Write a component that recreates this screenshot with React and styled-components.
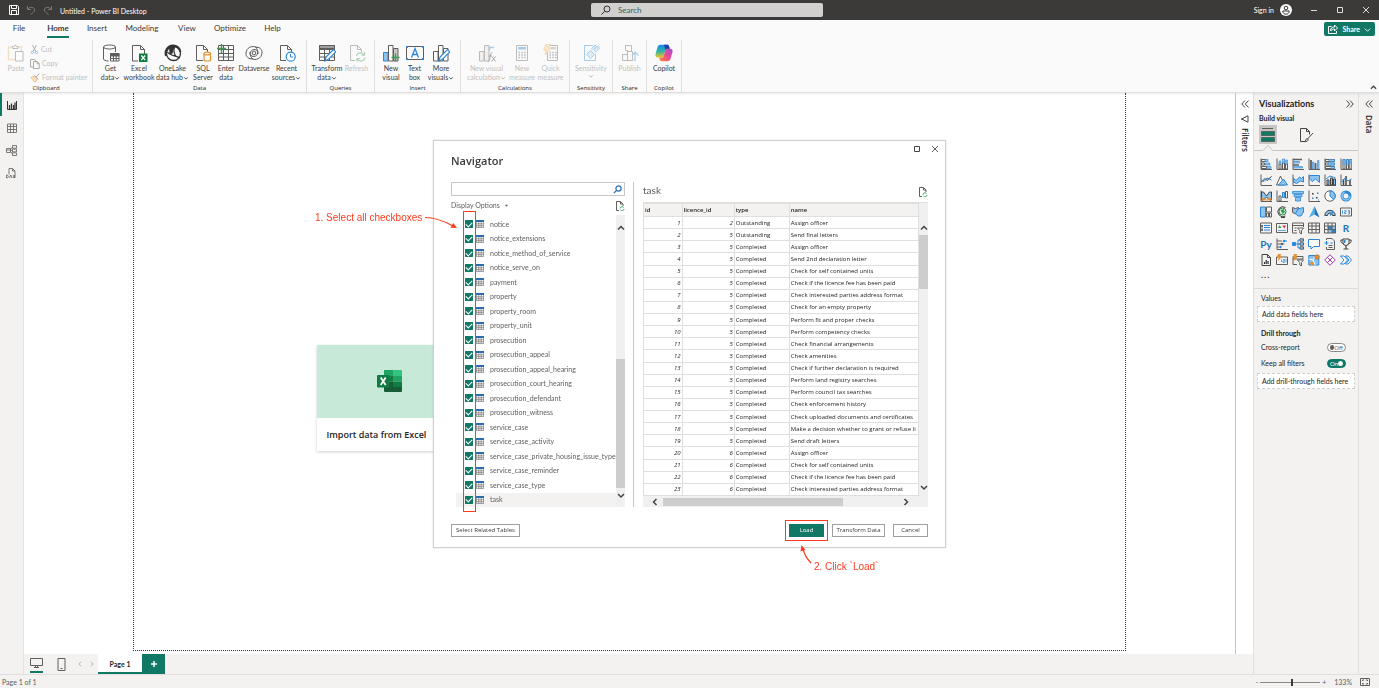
import { useState } from "react";
import styled, { createGlobalStyle, css } from "styled-components";

const green = "#117865";
const red = "#ff3b1f";
const ink = "#605e5c";
const blue = "#2b88d8";
const pale = "#8cc4f0";
const orange = "#e8912d";

const wide = `"Segoe UI", "Open Sans", sans-serif`;

const GlobalStyle = createGlobalStyle`
  * {
    box-sizing: border-box;
  }

  body {
    margin: 0;
    background: #f3f2f1;
    color: #252423;
    font-family: "Segoe UI", Lato, sans-serif;
    font-size: 7px;
    line-height: 9px;
  }

  button,
  input {
    margin: 0;
    padding: 0;
    border: 0;
    background: none;
    color: inherit;
    font: inherit;
  }

  svg {
    display: block;
    flex: none;
  }
`;

/* ---------- icons ---------- */

function Svg({ size = 18, box = 18, children, ...rest }) {
  return (
    <svg
      width={size}
      height={size}
      viewBox={`0 0 ${box} ${box}`}
      fill="none"
      stroke={ink}
      strokeWidth="1"
      aria-hidden="true"
      {...rest}
    >
      {children}
    </svg>
  );
}

const bars = (
  <>
    <path d="M1.500 17V8.500h4.500V17z" fill={pale} stroke={blue} />
    <path d="M6.500 17V1.500h4.500V17z" fill="#fff" />
    <path d="M11.500 17V4.500H16V17z" fill="#c8c6c4" />
  </>
);

const grid = <path d="M1.500 1.500h15v15h-15zM1.500 5.500h15M1.500 9.500h15M1.500 13h15M6.500 1.500v15M11.500 1.500v15" />;

const ribbonIcons = {
  paste: (
    <>
      <path d="M6 3H1.500v12.500H8M11 3h3.500v4" stroke="#edb87a" strokeWidth="1.500" />
      <path d="M5.500 4.500V2.500h1.500a1.200 1.200 0 0 1 2.400 0H11v2z" />
      <path d="M8.500 7.500h7.500v9.500H8.500z" fill="#fff" />
    </>
  ),
  database: (
    <>
      <path d="M1.500 3v12c0 1 2 2 5 2M13.500 8V3" />
      <ellipse cx="7.500" cy="3" rx="6" ry="2" />
      <path d="M8.500 9.500h8.500v7.500H8.500zM8.500 12h8.500M8.500 14.500h8.500M11.500 9.500V17M14.200 9.500V17" fill="#fff" />
      <path d="M8.500 9.500h8.500v2H8.500z" fill={ink} />
    </>
  ),
  excel: (
    <>
      <path d="M8 17H2.500V1.500h8l4 4V10M10.500 1.500v4h4" />
      <path d="M9 9.500h8.500V18H9z" fill="#107c41" stroke="none" />
      <path d="M11.300 11.500l3.900 4.600M15.200 11.500l-3.900 4.600" stroke="#fff" strokeWidth="1.200" />
    </>
  ),
  onelake: (
    <>
      <path d="M2 12C.5 7 3.500 1.500 9 1.500c4 0 7 2.500 7.300 6.500" stroke="#333" strokeWidth="2" />
      <path d="M5 2.500c2-1 4-1 5.500 0l-2 7-3 1z" fill="#333" stroke="none" />
      <circle cx="9.500" cy="9.500" r="7" stroke="#333" strokeWidth="1.300" />
      <path d="M3.500 8c2 3.500 9 4 12.500 6M10.500 3c-1 3-1 6 1.500 9.500" stroke="#333" strokeWidth="1.300" />
    </>
  ),
  sql: (
    <>
      <path d="M9 16.500H2.500V1.500h7l4 4V8M9.500 1.500v4h4" />
      <path d="M10 9.500v6.500c0 1.300 6.500 1.300 6.500 0V9.500" fill="#fff" stroke={orange} strokeWidth="1.200" />
      <ellipse cx="13.200" cy="9.500" rx="3.300" ry="1.400" fill="#fff" stroke={orange} strokeWidth="1.200" />
    </>
  ),
  enter: (
    <>
      {grid}
      <path d="M4.500 0v9M0 4.500h9" stroke="#3a9b54" strokeWidth="1.400" />
    </>
  ),
  dataverse: (
    <>
      <path d="M12 3.500C7 1 1.500 3.500 1 9c-.3 4 3 6.500 6.500 5.500" />
      <path d="M7.500 14.500C4 12 4.500 6 9 5.500c3 0 4.500 2 4 4.500" />
      <path d="M6 14.500C11 17 16.500 14.500 17 9c.3-4-3-6.500-6.500-5.500" />
      <path d="M10.500 3.500C14 6 13.500 12 9 12.500c-3 0-4.500-2-4-4.500" />
      <circle cx="9" cy="9" r="1.800" />
    </>
  ),
  recent: (
    <>
      <path d="M8 16.500H2.500V1.500h7l4 4V8M9.500 1.500v4h4" />
      <circle cx="12.700" cy="12.700" r="4.500" fill="#fff" stroke={blue} strokeWidth="1.200" />
      <path d="M12.500 10v3h2.500" stroke={blue} />
    </>
  ),
  transform: (
    <>
      {grid}
      <path d="M1.500 1.500h15v3h-15z" fill="#a19f9d" />
      <path d="M7 17l1-4 7.500-7.500 2.300 2.300-7.500 7.500z" fill="#fff" stroke={blue} strokeWidth="1.200" />
    </>
  ),
  refresh: (
    <>
      <path d="M7 16.500H2.500V1.500h7l4 4V8M9.500 1.500v4h4" />
      <path d="M8.500 12a4 4 0 0 1 7.500-1M16.500 8v3.200h-3M17 13.500a4 4 0 0 1-7.500 1.500M9 17.500v-3h3" stroke="#3a9b54" strokeWidth="1.200" />
    </>
  ),
  visual: (
    <>
      {bars}
      <path d="M13.500 9.500v8M9.500 13.500h8" stroke="#3a9b54" strokeWidth="1.300" />
    </>
  ),
  textbox: (
    <>
      <path d="M.5 2.500h17v13H.5z" />
      <path d="M0 2h2v2H0zM16 2h2v2h-2zM0 14h2v2H0zM16 14h2v2h-2z" fill={blue} stroke="none" />
      <path d="M5.500 13.500L9 4.500l3.500 9M6.800 10.500h4.400" stroke={blue} strokeWidth="1.300" />
    </>
  ),
  more: (
    <>
      <path d="M1.500 17V7.500h4.500V17zM6.500 17V1.500h4.500V17zM11.500 17V4.500H16V17z" fill="#fff" />
      <path d="M7 17l1-4 7.500-7.500 2.300 2.300-7.500 7.500z" fill="#fff" stroke={blue} strokeWidth="1.200" />
    </>
  ),
  calculation: (
    <>
      <path d="M1.500 17V7.500h4.500V17zM6.500 17V1.500h4.500V17z" fill="#e1dfdd" />
      <path d="M11.500 7V3.500H16" stroke={blue} strokeWidth="1.500" />
      <path d="M9.500 18c2 0 2-2 2.500-5s1-4.500 2.500-4.500M10.500 12h3.500M14 12.500l3.500 5M17.500 12.500l-4 5" stroke="#333" />
    </>
  ),
  measure: (
    <>
      <path d="M3.500 1.500h11v15h-11z" />
      <path d="M5 3h8v2.500H5z" fill={blue} stroke="none" />
      <path d="M5.500 8.500h7.500M5.500 11h7.500M5.500 13.500h7.500" strokeWidth="1.500" strokeDasharray="1.500 1.300" />
    </>
  ),
  quick: (
    <>
      <path d="M5.500 1.500h10v15h-10z" />
      <path d="M9 3h5v2.500H9z" fill="#a19f9d" stroke="none" />
      <path d="M7.500 8.500h7.500M7.500 11h7.500M7.500 13.500h7.500" strokeWidth="1.500" strokeDasharray="1.500 1.300" />
      <path d="M4.500 0h4.500L6.500 4H9l-6 7 1.500-5H1.500z" fill="#f7c98d" stroke={orange} strokeWidth=".8" />
    </>
  ),
  sensitivity: (
    <>
      <path d="M11 1.500H2.500v15h11V10" stroke={blue} />
      <path d="M4.500 10.500l4-4 4 4-4 4zM9 5.500L13 1l1.500 1.500-2.500 3L15.500 2l2 2-4.500 4.500" fill="#b9dbf5" stroke={blue} />
    </>
  ),
  publish: (
    <>
      <path d="M1.500 16.500V10.500h5v6zM6.500 16.500V6.500h-2V1.500h6v6M6.500 7.500h5v9h-5z" />
      <path d="M12.500 16.500h2M14 16V8.500M11 11.500l3.200-3.300 3.300 3.300" stroke={blue} strokeWidth="1.200" />
    </>
  ),
};

function CopilotIcon() {
  return (
    <Svg stroke="none">
      <defs>
        <linearGradient id="cpA" x1="0" y1="0" x2="0" y2="1">
          <stop offset="0" stopColor="#1a86e8" />
          <stop offset=".5" stopColor="#2bb5a8" />
          <stop offset="1" stopColor="#f2c21c" />
        </linearGradient>
        <linearGradient id="cpB" x1="1" y1="0" x2="0" y2="1">
          <stop offset="0" stopColor="#a24bea" />
          <stop offset=".5" stopColor="#ec4a8c" />
          <stop offset="1" stopColor="#f98a3c" />
        </linearGradient>
      </defs>
      <path d="M5.500.8h6.700c1 0 1.600.6 1.900 1.600l.7 2.300h-2.500c-1.200 0-1.700.6-2 1.700L8.600 12c-.3 1-.8 1.600-1.900 1.600H3C.7 13.600 0 12 .6 9.800l1.900-6.500C3 1.700 3.800.8 5.500.8z" fill="url(#cpA)" />
      <path d="M12.500 17.200H6.800c-1.200 0-1.800-.6-2.100-1.700l-.5-1.900h2.400c1.200 0 1.800-.6 2.100-1.700l1.600-5.500c.3-1 .9-1.700 2-1.700H15c2.300 0 3 1.700 2.400 3.800l-1.900 6.300c-.5 1.600-1.300 2.400-3 2.400z" fill="url(#cpB)" />
      <path d="M9 .8h3.200c1 0 1.600.6 1.900 1.600l.7 2.300h-2.500c-1 0-1.600.4-1.900 1.200z" fill="#1f3fae" />
    </Svg>
  );
}

const axis = <path d="M1 .5v11h11" />;
const frame = <path d="M.5 1h11v10H.5z" />;
const sheet = <path d="M.5 1h11v10H.5zM.5 4h11M.5 7.500h11M4 1v10M8 1v10" />;
const bolt = <path d="M2 0h3.500L4 2.500h2L2 7l.5-3H.8z" fill={orange} stroke="none" />;

const visuals = [
  ["Stacked bar chart", <>{axis}<path d="M1.500 1.500h4v2h-4zM1.500 5h3v2h-3zM1.500 8.500h5v2h-5z" /><path d="M5 1.500h3v2H5zM5 5h5v2H5zM7 8.500h4v2H7z" fill={pale} stroke={blue} strokeWidth=".6" /></>],
  ["Stacked column chart", <>{axis}<path d="M3 6h2v5H3zM6.500 5h2v6h-2zM9.500 6h2v5h-2z" /><path d="M3 3h2v3H3zM6.500 1h2v4h-2zM9.500 2h2v4h-2z" fill={pale} stroke={blue} strokeWidth=".6" /></>],
  ["Clustered bar chart", <>{axis}<path d="M1 1.500h9M1 7h6" strokeWidth="1.500" /><path d="M1.500 3.500h6v1.500h-6zM1.500 8.500h9v1.500h-9z" fill={pale} stroke={blue} strokeWidth=".6" /></>],
  ["Clustered column chart", <>{axis}<path d="M3 2v9M7.500 5v6" strokeWidth="1.800" /><path d="M4.500 4h1.500v7H4.500zM9.500 2.500H11V11H9.500z" fill={pale} stroke={blue} strokeWidth=".6" /></>],
  ["100% stacked bar chart", <>{axis}<path d="M1.500 1.500h9v2h-9zM1.500 5h9v2h-9zM1.500 8.500h9v2h-9z" /><path d="M5 1.500h5.500v2H5zM4 5h6.500v2H4zM7 8.500h3.500v2H7z" fill={pale} stroke={blue} strokeWidth=".6" /></>],
  ["100% stacked column chart", <>{axis}<path d="M3 1.500h2V11H3zM6.500 1.500h2V11h-2zM9.800 1.500h2V11h-2z" /><path d="M3 1.500h2V6H3zM6.500 1.500h2V7h-2zM9.800 1.500h2V5h-2z" fill={pale} stroke={blue} strokeWidth=".6" /></>],
  ["Line chart", <>{axis}<path d="M1.500 8L5 4.500l2 2 4.500-4" stroke="#333" /><path d="M1.500 6L4 7.500 7 4l4.500 2" stroke={blue} /></>],
  ["Area chart", <><path d="M.5 11l4-9 4 9z" fill="#fff" /><path d="M2.500 11l5-6 4 6z" fill={pale} stroke={blue} /></>],
  ["Stacked area chart", <>{axis}<path d="M1.500 4L4 6.500 7.500 3l2 1.500 2-2V8l-3-1-4 2.500-3-1.500z" fill={pale} stroke={blue} /></>],
  ["100% stacked area chart", <>{axis}<path d="M1.500 1.500h10v7L7.500 5l-3 2.500-3-2.500z" fill={pale} stroke={blue} /></>],
  ["Line and stacked column chart", <>{axis}<path d="M3 6h2v5H3zM6.500 4h2v7h-2zM9.500 5h2v6h-2z" fill={pale} stroke="#444" /><path d="M2 5l4-3 5.500 2" stroke={blue} /></>],
  ["Line and clustered column chart", <>{axis}<path d="M3.500 5v6M6 2v9M10 6v5" stroke="#444" strokeWidth="1.500" /><path d="M2 8l3-4 3 3 3.500-2" stroke={blue} /></>],
  ["Ribbon chart", <>{axis}<path d="M1.500 2h2l3 4 3-4h2v8h-2l-3-3-3 3h-2z" fill={pale} stroke="#444" /><path d="M1.500 7l5 2.500L11.500 7v3.500h-10z" fill={orange} stroke="none" opacity=".8" /></>],
  ["Waterfall chart", <>{axis}<path d="M3 6h2v5H3zM9.500 1.500h2V8h-2z" /><path d="M6.500 2.500h2v5h-2z" fill={pale} stroke={blue} /></>],
  ["Funnel chart", <path d="M.5 1.500h11v2.200H.5zM2 4.500h8v2.200H2zM3.500 7.500h5v3.500h-5z" fill={pale} stroke={blue} strokeWidth=".8" />],
  ["Scatter chart", <>{axis}<path d="M4 3h1.500v1.500H4zM8 7h1.500v1.500H8z" fill="#333" stroke="none" /><path d="M9 2.500h1.500V4H9zM4 7.500h1.500V9H4zM10 9.500h1v1h-1z" fill={blue} stroke="none" /></>],
  ["Pie chart", <><circle cx="6" cy="6" r="5.200" fill="#fff" /><path d="M6 .8a5.200 5.200 0 0 1 3.500 9L6 6z" fill={pale} stroke={blue} /></>],
  ["Donut chart", <><circle cx="6" cy="6" r="4" stroke={blue} strokeWidth="3" /><circle cx="6" cy="6" r="4" stroke={pale} strokeWidth="1.500" strokeDasharray="17 9" /></>],
  ["Treemap", <><path d="M.5 1h5v10h-5z" fill={pale} stroke={blue} /><path d="M6.500 1h5v5h-5zM6.500 7h2v4h-2zM9.500 7h2v4h-2z" /></>],
  ["Map", <><path d="M9.500 10a5 5 0 1 1 0-8.500M5 11.500h4" stroke="#444" /><circle cx="6.500" cy="5.500" r="3.500" fill="#e7f3e9" stroke="#2f7d46" /><path d="M4.500 4l3-1 1.500 3-2.500 2z" fill="#2f9d57" stroke="none" /></>],
  ["Filled map", <><path d="M.5 1.500l3 1 3-1v5L4 8 .5 6.500z" fill={pale} /><path d="M6 3l5.500-1.500V6L9 10H6L3.500 7.500z" fill={pale} stroke={blue} /></>],
  ["Azure map", <><path d="M6.500 0L1 11.500l5.500-3z" fill="#4db2ec" stroke="none" /><path d="M6.500 0l5 11.500-5-3z" fill="#1673bd" stroke="none" /></>],
  ["Gauge", <><path d="M.8 9.500a5.200 5.200 0 0 1 10.400 0H8.500a2.500 2.500 0 0 0-5 0z" fill={pale} stroke="#444" /><path d="M6 9.500L9.500 5" stroke={blue} strokeWidth="1.300" /></>],
  ["Card", <><path d="M.5 2h11v8H.5z" /><path d="M2.500 4.500v3.500M4.500 4.500H6V6H4.500v1.500H6.200M8 4.500h1.500v3.500H8M8 6h1.500" stroke={blue} strokeWidth=".8" /></>],
  ["Multi-row card", <>{frame}<path d="M2 3v2.500M2 6.500V9" stroke="#444" strokeWidth="1.500" /><path d="M4 3.500h6M4 5.500h6M4 8h6" stroke={blue} /></>],
  ["KPI", <><path d="M.5 1.500h11v9H.5z" /><path d="M2 6l1.700-3 1.700 3z" fill="#3a9b54" stroke="none" /><path d="M6.500 3.500H10L8.200 6.500z" fill="#d13438" stroke="none" /><path d="M2 8.500h8" stroke={blue} strokeWidth=".7" /></>],
  ["Slicer", <><path d="M5 11H.5V1h11v4M.5 3.500h11M2.500 6h2M2.500 8.500h2" /><path d="M5.500 6h6L9.500 8.500V12L7.800 11V8.500z" fill="#fff" /></>],
  ["Table", sheet],
  ["Matrix", <><path d="M4 4h7.500v7H4z" fill={pale} stroke="none" /><path d="M4 4h4v3.500H4zM8 7.500h3.500V11H8z" fill={blue} stroke="none" />{sheet}</>],
  ["R script visual", "R"],
  ["Python visual", "Py"],
  ["Key influencers", <>{axis}<path d="M1 3h5M1 6h4M1 9h2.500" /><path d="M8 3h3M5.500 6h3" stroke={blue} /><circle cx="8" cy="3" r="1.200" fill={blue} stroke="none" /><circle cx="6" cy="6" r="1.200" fill={ink} stroke="none" /><circle cx="4.500" cy="9" r="1.200" fill={blue} stroke="none" /></>],
  ["Decomposition tree", <><path d="M3.500 6H8M6 6V2h2M6 6v4h2" stroke={blue} /><path d="M.5 4.500h3v3h-3z" fill={blue} stroke={blue} /><path d="M8 .8h3.500v2.400H8zM8 4.800h3.500v2.400H8zM8 8.800h3.500v2.400H8z" fill={pale} /></>],
  ["Q&A", <path d="M.5 1.500h11v7H5.500L3 11V8.500H.5z" fill="#fff" stroke={blue} />],
  ["Narrative", <><path d="M2.500 2V.5H8L10.500 3v8.500h-8V9" /><path d="M4.500 7.500h4M4.500 9.500h4" /><path d="M2.500 3v4M.5 5h4M6.500 5H9" stroke={blue} /></>],
  ["Metrics", <><path d="M3 1h6v3.500a3 3 0 0 1-6 0zM3 2H.8c0 2.500 1 3.500 2.400 3.500M9 2h2.200c0 2.500-1 3.500-2.400 3.500" stroke="#444" /><path d="M6 7.500v3M3.500 11h5" stroke="#444" strokeWidth="1.200" /><path d="M4 2h1.500v3H4z" fill={blue} stroke="none" /></>],
  ["Paginated report", <><path d="M2 .5h5.500L10.500 3.500v8H2zM7.500.5v3h3" stroke="#444" /><path d="M4.500 10V8M6.200 10V6M8 10V7" stroke="#333" strokeWidth="1.200" /></>],
  ["Card (new)", <><path d="M.5 3h11v7.500H.5z" /><path d="M5.500 8V5.500M7 5.500h1.500V7H7v1.500h1.500M10 5.200v3.300" stroke={blue} strokeWidth=".8" />{bolt}</>],
  ["Slicer (new)", <><path d="M5 10.500H1v-8h10V5M1 5h10" /><path d="M5.500 6h6L9.500 8.500V12L7.800 11V8.500z" fill="#fff" />{bolt}</>],
  ["ArcGIS map", <><path d="M.8 1.500h10v9.500h-10z" fill={pale} stroke={blue} /><path d="M.8 5l4 1 2.500 5M4.800 6l3-4.500" stroke="#fff" /><circle cx="9" cy="3" r="2.200" fill={orange} stroke="#a4501a" strokeWidth=".5" /><circle cx="4" cy="9.500" r="1.800" fill={orange} stroke="none" /></>],
  ["Power Apps", <><path d="M6 .7L11.300 6 6 11.300.7 6z" fill="#fff" stroke="#a33bb0" /><path d="M3.300 3.300l5.400 5.400M8.700 3.300L3.300 8.700" stroke="#a33bb0" /></>],
  ["Power Automate", <><path d="M.5 2h3.500L7.500 6 4 10H.5L4 6z" fill="#fff" stroke={blue} /><path d="M5.500 2H8l3.500 4L8 10H5.500L9 6z" fill="#fff" stroke={blue} /></>],
];

function Chevron({ d = "M1 3l3 3 3-3", size = 8, stroke = "#444", width = 1 }) {
  return (
    <Svg size={size} box={8} stroke={stroke} strokeWidth={width}>
      <path d={d} />
    </Svg>
  );
}

const up = "M1 5.500l3-3 3 3";
const left = "M5.500 1l-3 3 3 3";
const right = "M2.500 1l3 3-3 3";
const doubleLeft = "M4 .5L.8 4 4 7.500M7.500.5L4.300 4l3.200 3.500";
const doubleRight = "M.5.500L3.700 4 .5 7.500M4 .5L7.200 4 4 7.500";

function FileRefreshIcon() {
  return (
    <Svg size={10} box={10}>
      <path d="M4 9.500H1.500V.5h4l2.500 2.500v2M5.500.5V3H8" />
      <path d="M5 7.500a2 2 0 0 1 3.500-1M9 8a2 2 0 0 1-3.500 1" stroke="#2f9d57" />
    </Svg>
  );
}

/* ---------- window frame ---------- */

const Shell = styled.div`
  display: flex;
  flex-direction: column;
  height: 100vh;
  overflow: hidden;
`;

const TitleBar = styled.header`
  display: grid;
  grid-template-columns: 591fr 232fr 556fr;
  align-items: center;
  height: 20px;
  background: #3b3a39;
  color: #fff;
`;

const TitleLeft = styled.div`
  display: flex;
  align-items: center;
  gap: 7px;
  padding-left: 9px;

  span {
    padding-top: 3px;
  }
`;

const TitleRight = styled.div`
  display: flex;
  align-items: center;
  justify-content: flex-end;
  gap: 18px;
  padding-right: 9px;
`;

const SignIn = styled.button`
  display: flex;
  align-items: center;
  gap: 6px;
`;

const SearchBox = styled.label`
  display: flex;
  align-items: center;
  gap: 7px;
  height: 14px;
  padding-left: 10px;
  border-radius: 2px;
  background: #d2d0ce;

  input {
    flex: 1;
    min-width: 0;
    font-size: 8px;
    outline: none;
  }

  input::placeholder {
    color: #33665c;
    opacity: 1;
  }
`;

const MenuBar = styled.nav`
  display: flex;
  align-items: center;
  height: 20px;
  padding-right: 4px;
  background: #fafafa;
  font-size: 8px;
`;

const MenuTab = styled.button`
  width: ${({ $w }) => $w}px;
  height: 18px;
  color: #3b3a39;
  text-align: center;

  span {
    display: inline-block;
    padding: 1px 0 3px;
    border-bottom: 2px solid transparent;
  }

  ${({ $active }) =>
    $active &&
    css`
      font-weight: 700;

      span {
        border-color: ${green};
      }
    `}
`;

const ShareButton = styled.button`
  display: flex;
  align-items: center;
  gap: 4px;
  height: 14px;
  margin: 0 0 2px auto;
  padding: 0 4px;
  border-radius: 2px;
  background: ${green};
  color: #fff;
  font-size: 7px;
  font-weight: 700;
`;

const Ribbon = styled.div`
  display: flex;
  height: 53px;
  border-bottom: 1px solid #e1dfdd;
  background: #fafafa;
  box-shadow: 0 1px 2px rgba(0, 0, 0, 0.08);
  z-index: 1;
`;

const Group = styled.section`
  display: flex;
  flex-direction: column;
  justify-content: space-between;
  padding: 4px 4px 0;
  border-right: 1px solid #e1dfdd;

  h2 {
    margin: 0;
    font-family: ${wide};
    font-size: 6px;
    font-weight: 400;
    line-height: 7px;
    text-align: center;
  }
`;

const Tools = styled.div`
  display: flex;
  justify-content: center;
`;

const Tool = styled.button`
  display: flex;
  flex-direction: column;
  align-items: center;
  width: ${({ $w }) => $w}px;
  color: #3b3a39;
  white-space: nowrap;

  > svg {
    margin-bottom: 2px;
  }

  > span {
    display: flex;
    align-items: center;
  }

  &:disabled {
    color: #c1bfbd;
  }

  &:disabled svg {
    opacity: 0.4;
  }
`;

const ClipList = styled.div`
  display: flex;
  flex-direction: column;
  gap: 3px;
  width: 60px;
  padding-left: 2px;

  button {
    display: flex;
    align-items: center;
    gap: 2px;
    height: 11px;
    color: #c1bfbd;
    white-space: nowrap;
  }

  svg {
    opacity: 0.5;
  }
`;

const CollapseButton = styled.button`
  align-self: flex-end;
  margin: 0 2px 1px auto;
`;

const Body = styled.div`
  display: flex;
  flex: 1;
  min-height: 0;
`;

const SideNav = styled.nav`
  display: flex;
  flex-direction: column;
  width: 24px;
  border-right: 1px solid #e6e4e2;
  background: #f3f2f1;
`;

const SideButton = styled.button`
  display: grid;
  place-items: center;
  height: 23px;
  padding-right: 2px;
  border-left: 2px solid ${({ $active }) => ($active ? green : "transparent")};
`;

const Center = styled.div`
  display: flex;
  flex: 1;
  flex-direction: column;
  min-width: 0;
`;

const Workspace = styled.div`
  display: flex;
  flex: 1;
  background: #fff;
`;

const Canvas = styled.main`
  flex: 1;
  padding: 0 109px 3px;
`;

const ReportPage = styled.div`
  height: 100%;
  padding-top: 252px;
  border: 1px dotted #3b3a39;
  border-top: 0;
`;

const StarterRow = styled.div`
  display: flex;
  max-width: 626px;
  margin: 0 auto;
`;

const StarterCard = styled.button`
  width: 144px;
  background: #fff;
  box-shadow: 0 1px 3px rgba(0, 0, 0, 0.2);
  font-family: ${wide};
  font-size: 9px;
  font-weight: 600;
  line-height: 12px;
  text-align: left;
  white-space: nowrap;

  div {
    display: grid;
    place-items: center;
    height: 73px;
    background: #c7e9d7;
  }

  p {
    margin: 0;
    padding: 11px 10px 10px;
  }
`;

const SidePane = styled.aside`
  display: flex;
  flex-direction: column;
  align-items: center;
  gap: 7px;
  width: ${({ $w }) => $w}px;
  padding-top: 7px;
  border-left: ${({ $line }) => $line};
  background: ${({ $bg }) => $bg};

  h2 {
    margin: 0;
    font-family: ${wide};
    font-size: 8px;
    font-weight: 600;
    line-height: 10px;
    writing-mode: vertical-rl;
  }
`;

const FilterHeading = styled.div`
  display: flex;
  flex-direction: column;
  align-items: center;
  gap: 5px;
`;

const PageTabs = styled.div`
  display: flex;
  height: 20px;
  background: #f3f2f1;
`;

const LayoutButton = styled.button`
  width: 25px;
  display: grid;
  place-items: center;

  span {
    padding-bottom: 2px;
    border-bottom: 2px solid ${({ $active }) => ($active ? green : "transparent")};
  }
`;

const PageArrow = styled.button`
  width: 12px;
  display: grid;
  place-items: center;
`;

const PageTab = styled.button`
  width: 44px;
  padding-top: 2px;
  border-bottom: 2px solid ${green};
  background: #fff;
  font-weight: 700;
`;

const AddPage = styled.button`
  width: 23px;
  display: grid;
  place-items: center;
  background: ${green};
`;

/* ---------- visualizations pane ---------- */

const VizPane = styled.aside`
  width: 106px;
  padding-top: 6px;
  border-right: 1px solid #e1dfdd;
  border-left: 1px solid #e1dfdd;
  background: #f3f2f1;
`;

const VizTitle = styled.div`
  display: flex;
  align-items: center;
  justify-content: space-between;
  padding: 0 4px 0 5px;

  h2 {
    margin: 0;
    font-size: 9px;
    font-weight: 700;
    line-height: 10px;
  }
`;

const VizSub = styled.h3`
  margin: 0;
  padding: 5px 5px 2px;
  font-size: 7px;
  font-weight: 700;
  line-height: 9px;
`;

const VizModes = styled.div`
  display: flex;
  gap: 20px;
  padding: 0 5px;

  button {
    display: grid;
    place-items: center;
    width: 18px;
    height: 19px;
  }

  button:first-child {
    background: #c8c6c4;
  }
`;

const Notch = styled.svg`
  width: 100%;
  height: 8px;
`;

const VizGrid = styled.div`
  display: grid;
  grid-template-columns: repeat(6, 1fr);
  padding: 4px 4px 0;

  button {
    display: grid;
    place-items: center;
    height: 16px;
    color: #2072b8;
    font-size: 10px;
    font-weight: 700;
  }
`;

const MoreDots = styled.button`
  display: block;
  padding: 2px 7px 8px;
  font-size: 9px;
  letter-spacing: 1px;
  line-height: 10px;
`;

const Wells = styled.div`
  display: flex;
  flex-direction: column;
  gap: 3px;
  padding: 4px 3px;
  border-top: 1px solid #dddbd9;
`;

const WellLabel = styled.h4`
  margin: ${({ $strong }) => ($strong ? "3px 0 0" : 0)};
  padding: 0 4px;
  font-size: 7px;
  font-weight: ${({ $strong }) => ($strong ? 700 : 400)};
  line-height: 10px;
`;

const Well = styled.div`
  padding: 2px 4px;
  border: 1px dashed #d2d0ce;
  background: #fff;
  line-height: 10px;
  white-space: nowrap;
`;

const WellRow = styled.label`
  display: flex;
  align-items: center;
  justify-content: space-between;
  height: 13px;
  padding: 0 9px 0 4px;
`;

const Switch = styled.span`
  position: relative;
  display: flex;
  flex-direction: ${({ $on }) => ($on ? "row-reverse" : "row")};
  align-items: center;
  justify-content: space-between;
  width: 19px;
  height: 9px;
  padding: 0 2px;
  border: 1px solid ${({ $on }) => ($on ? green : "#8a8886")};
  border-radius: 5px;
  background: ${({ $on }) => ($on ? green : "#fff")};
  color: ${({ $on }) => ($on ? "#fff" : ink)};
  font-size: 6px;
  line-height: 7px;

  i {
    width: 5px;
    height: 5px;
    border-radius: 50%;
    background: ${({ $on }) => ($on ? "#fff" : ink)};
  }

  input {
    position: absolute;
    inset: 0;
    opacity: 0;
  }
`;

/* ---------- status bar ---------- */

const StatusBar = styled.footer`
  display: flex;
  align-items: center;
  justify-content: space-between;
  height: 14px;
  padding: 1px 9px 0 2px;
  border-top: 1px solid #e1dfdd;
  color: ${ink};
`;

const Zoom = styled.div`
  display: flex;
  align-items: center;
  gap: 2px;

  input {
    width: 60px;
    height: 8px;
    appearance: none;
  }

  input::-webkit-slider-runnable-track {
    height: 1px;
    background: #8a8886;
  }

  input::-webkit-slider-thumb {
    width: 2px;
    height: 7px;
    margin-top: -3px;
    appearance: none;
    background: #3b3a39;
  }

  output {
    margin: 0 6px;
  }
`;

/* ---------- navigator dialog ---------- */

const Overlay = styled.div`
  position: fixed;
  inset: 0;
  z-index: 2;
  display: grid;
  place-items: center;
`;

const Dialog = styled.section`
  position: relative;
  width: 513px;
  border: 1px solid #d2d0ce;
  background: #fff;
  box-shadow: 0 0 2px rgba(0, 0, 0, 0.12);
`;

const DialogButtons = styled.div`
  display: flex;
  justify-content: flex-end;
  gap: 10px;
  padding: 4px 6px 0;
`;

const DialogTitle = styled.h1`
  margin: 0;
  padding: 0 17px 14px;
  color: #3b3a39;
  font-family: ${wide};
  font-size: 11px;
  font-weight: 600;
  line-height: 15px;
`;

const DialogBody = styled.div`
  display: flex;
  height: 325px;
  margin: 0 17px;
`;

const TreePane = styled.div`
  display: flex;
  flex-direction: column;
  width: 174px;
`;

const TreeSearch = styled.label`
  display: flex;
  align-items: center;
  height: 14px;
  padding-right: 2px;
  border: 1px solid #c8c6c4;

  input {
    flex: 1;
    min-width: 0;
    outline: none;
  }
`;

const TreeOptions = styled.div`
  display: flex;
  align-items: center;
  justify-content: space-between;
  height: 19px;
  color: ${ink};

  button {
    display: flex;
    align-items: center;
    gap: 4px;
  }
`;

const TreeScroll = styled.div`
  display: flex;
  flex: 1;
  padding-left: 5px;
`;

const Tree = styled.ul`
  display: flex;
  flex: 1;
  flex-direction: column;
  min-width: 0;
  margin: 0;
  padding: 2px 0 0;
  list-style: none;
`;

const TreeRow = styled.li`
  flex: 1;
  display: flex;
  align-items: center;
  background: ${({ $selected }) => ($selected ? "#f3f2f1" : "none")};
  color: ${ink};

  label {
    display: flex;
    align-items: center;
    padding-left: 9px;
    white-space: nowrap;
  }

  svg {
    margin: 0 6px 0 3px;
  }
`;

const Check = styled.input`
  display: grid;
  place-items: center;
  width: 8px;
  height: 8px;
  border-radius: 1px;
  appearance: none;
  background: #fff;
  box-shadow: inset 0 0 0 1px ${green};

  &:checked {
    background: ${green};
  }

  &:checked::after {
    content: "";
    width: 5px;
    height: 3px;
    margin-top: -1px;
    border: solid #fff;
    border-width: 0 0 1px 1px;
    transform: rotate(-45deg);
  }
`;

const ScrollBar = styled.div`
  display: flex;
  flex: none;
  flex-direction: ${({ $across }) => ($across ? "row" : "column")};
  align-items: center;
  justify-content: space-between;
  width: ${({ $across }) => ($across ? "auto" : "9px")};
  height: ${({ $across }) => ($across ? "10px" : "auto")};
  padding: ${({ $pad }) => $pad};
  background: #f0f0f0;
`;

const Thumb = styled.i`
  flex: none;
  width: ${({ $w }) => $w};
  height: ${({ $h }) => $h};
  margin: ${({ $m }) => $m || 0};
  background: #cdcdcd;
`;

const Divider = styled.div`
  width: 1px;
  margin: 0 9px 0 8px;
  background: #c8c6c4;
`;

const Preview = styled.div`
  display: flex;
  flex: 1;
  flex-direction: column;
  min-width: 0;
`;

const PreviewHead = styled.div`
  display: flex;
  align-items: center;
  justify-content: space-between;
  height: 20px;
  color: ${ink};

  h2 {
    margin: 0;
    padding-bottom: 3px;
    font-size: 10px;
    font-weight: 400;
    line-height: 13px;
  }
`;

const PreviewBody = styled.div`
  display: grid;
  grid-template-columns: 1fr 9px;
  flex: 1;
  min-height: 0;
  border-top: 1px solid #e1dfdd;
  background: #f3f2f1;
`;

const DataTable = styled.table`
  width: 100%;
  height: 293px;
  border-collapse: collapse;
  table-layout: fixed;
  background: #fff;
  font-family: ${wide};
  font-size: 6px;
  line-height: 8px;

  th,
  td {
    overflow: hidden;
    padding: 0 1px;
    border: 1px solid #e1dfdd;
    text-align: left;
    white-space: nowrap;
  }

  th {
    height: 13px;
    background: #f3f2f1;
    font-weight: 600;
  }

  td.num {
    font-style: italic;
    text-align: right;
  }
`;

const Footer = styled.footer`
  display: flex;
  gap: 8px;
  padding: 17px 17px 10px;
`;

const DialogButton = styled.button`
  width: ${({ $w }) => $w}px;
  height: 13px;
  border: 1px solid ${({ $primary }) => ($primary ? green : "#a19f9d")};
  background: ${({ $primary }) => ($primary ? green : "#fff")};
  color: ${({ $primary }) => ($primary ? "#fff" : "#3b3a39")};
  font-family: ${wide};
  font-size: 6px;
  line-height: 9px;
  white-space: nowrap;
`;

const LoadMark = styled.span`
  margin: -4px -4px -4px auto;
  padding: 3px;
  border: 1px solid ${red};

  button {
    display: block;
  }
`;

const Note = styled.span`
  position: absolute;
  top: ${({ $y }) => $y}px;
  left: ${({ $x }) => $x}px;
  color: ${red};
  font-family: "Liberation Sans", Arial, sans-serif;
  font-size: 10px;
  line-height: 12px;
  white-space: nowrap;
`;

const NoteArrow = styled.svg`
  position: absolute;
  top: ${({ $y }) => $y}px;
  left: ${({ $x }) => $x}px;
`;

const NoteBox = styled.span`
  position: absolute;
  top: 70px;
  bottom: 35px;
  left: 29px;
  width: 13px;
  border: 1px solid ${red};
  pointer-events: none;
`;

/* ---------- data ---------- */

const menu = [
  ["File", 38],
  ["Home", 40],
  ["Insert", 38],
  ["Modeling", 52],
  ["View", 38],
  ["Optimize", 48],
  ["Help", 37],
];

const groups = [
  {
    name: "Data",
    tools: [
      ["database", 27, "Get", "data", true],
      ["excel", 30, "Excel", "workbook"],
      ["onelake", 37, "OneLake", "data hub", true],
      ["sql", 24, "SQL", "Server"],
      ["enter", 22, "Enter", "data"],
      ["dataverse", 34, "Dataverse"],
      ["recent", 31, "Recent", "sources", true],
    ],
  },
  {
    name: "Queries",
    tools: [
      ["transform", 32, "Transform", "data", true],
      ["refresh", 27, "Refresh", "", false, true],
    ],
  },
  {
    name: "Insert",
    tools: [
      ["visual", 24, "New", "visual"],
      ["textbox", 23, "Text", "box"],
      ["more", 30, "More", "visuals", true],
    ],
  },
  {
    name: "Calculations",
    tools: [
      ["calculation", 43, "New visual", "calculation", true, true],
      ["measure", 28, "New", "measure", false, true],
      ["quick", 29, "Quick", "measure", false, true],
    ],
  },
  { name: "Sensitivity", tools: [["sensitivity", 34, "Sensitivity", " ", true, true]] },
  { name: "Share", tools: [["publish", 25, "Publish", "", false, true]] },
  { name: "Copilot", tools: [["copilot", 26, "Copilot"]] },
];

const tables = [
  "notice",
  "notice_extensions",
  "notice_method_of_service",
  "notice_serve_on",
  "payment",
  "property",
  "property_room",
  "property_unit",
  "prosecution",
  "prosecution_appeal",
  "prosecution_appeal_hearing",
  "prosecution_court_hearing",
  "prosecution_defendant",
  "prosecution_witness",
  "service_case",
  "service_case_activity",
  "service_case_private_housing_issue_type",
  "service_case_reminder",
  "service_case_type",
  "task",
];

const taskNames = [
  "Assign officer",
  "Send final letters",
  "Assign officer",
  "Send 2nd declaration letter",
  "Check for self contained units",
  "Check if the licence fee has been paid",
  "Check interested parties address format",
  "Check for an empty property",
  "Perform fit and proper checks",
  "Perform competency checks",
  "Check financial arrangements",
  "Check amenities",
  "Check if further declaration is required",
  "Perform land registry searches",
  "Perform council tax searches",
  "Check enforcement history",
  "Check uploaded documents and certificates",
  "Make a decision whether to grant or refuse li",
  "Send draft letters",
  "Assign officer",
  "Check for self contained units",
  "Check if the licence fee has been paid",
  "Check interested parties address format",
];

const rows = taskNames.map((name, i) => ({
  id: i + 1,
  licence: i === 0 ? 2 : i < 19 ? 5 : 6,
  type: i < 2 ? "Outstanding" : "Completed",
  name,
}));

/* ---------- components ---------- */

function Toggle({ label, initial }) {
  const [on, setOn] = useState(initial);

  return (
    <WellRow>
      {label}
      <Switch $on={on}>
        <i />
        {on ? "On" : "Off"}
        <input
          type="checkbox"
          role="switch"
          aria-label={label}
          checked={on}
          onChange={() => setOn(!on)}
        />
      </Switch>
    </WellRow>
  );
}

function RibbonBar() {
  return (
    <Ribbon>
      <Group>
        <Tools>
          <Tool $w={24} disabled>
            <Svg>{ribbonIcons.paste}</Svg>
            <span>Paste</span>
          </Tool>
          <ClipList>
            <button disabled>
              <Svg size={9} box={10}>
                <path d="M2.500 0l4 7M7 0L3.500 7" />
                <circle cx="2.500" cy="8.300" r="1.300" stroke={blue} />
                <circle cx="7.200" cy="8.300" r="1.300" stroke={blue} />
              </Svg>
              Cut
            </button>
            <button disabled>
              <Svg size={10} box={10}>
                <path d="M3.500 8H.5V.5h4L6 2M3.500 2.500h3.700l2 2v5H3.500zM7 2.500v2.200h2" />
              </Svg>
              Copy
            </button>
            <button disabled>
              <Svg size={10} box={10}>
                <path d="M.8 4.500L5 3l2.500 3L5 9.500z" fill="#f7c98d" stroke={orange} />
                <path d="M4.500 2.500l3.500 4M6 4l3.500-3.500" />
              </Svg>
              Format painter
            </button>
          </ClipList>
        </Tools>
        <h2>Clipboard</h2>
      </Group>
      {groups.map((group) => (
        <Group key={group.name}>
          <Tools>
            {group.tools.map(([icon, w, first, second, arrow, off]) => (
              <Tool key={icon} $w={w} disabled={off}>
                {icon === "copilot" ? <CopilotIcon /> : <Svg>{ribbonIcons[icon]}</Svg>}
                <span>{first}</span>
                {second && (
                  <span>
                    {second}
                    {arrow && <Chevron size={6} d="M1.500 3L4 5.500 6.500 3" width={1.2} />}
                  </span>
                )}
              </Tool>
            ))}
          </Tools>
          <h2>{group.name}</h2>
        </Group>
      ))}
      <CollapseButton aria-label="Collapse ribbon">
        <Chevron d={up} size={7} width={1.5} />
      </CollapseButton>
    </Ribbon>
  );
}

function Navigator() {
  const [picked, setPicked] = useState(() => new Set(tables));

  const handlePick = (name) => {
    const next = new Set(picked);
    if (!next.delete(name)) next.add(name);
    setPicked(next);
  };

  return (
    <Overlay>
      <Dialog role="dialog" aria-label="Navigator">
        <DialogButtons>
          <button aria-label="Maximize">
            <Chevron d="M1.500 1.500h5v5h-5z" />
          </button>
          <button aria-label="Close">
            <Chevron d="M1 1l6 6M7 1L1 7" stroke={ink} />
          </button>
        </DialogButtons>
        <DialogTitle>Navigator</DialogTitle>
        <DialogBody>
          <TreePane>
            <TreeSearch>
              <input type="text" aria-label="Search tables" />
              <Svg size={9} box={9} stroke="#2b6cb0" strokeWidth="1.200">
                <circle cx="5.500" cy="3.500" r="2.600" />
                <path d="M3.500 5.500L.8 8.200" />
              </Svg>
            </TreeSearch>
            <TreeOptions>
              <button>
                Display Options
                <Svg size={5} box={6} stroke="none">
                  <path d="M1 2h4L3 4.500z" fill={ink} />
                </Svg>
              </button>
              <button aria-label="Refresh list">
                <FileRefreshIcon />
              </button>
            </TreeOptions>
            <TreeScroll>
              <Tree>
                {tables.map((name) => (
                  <TreeRow key={name} $selected={name === "task"}>
                    <label>
                      <Check
                        type="checkbox"
                        checked={picked.has(name)}
                        onChange={() => handlePick(name)}
                      />
                      <Svg size={8} box={8} strokeWidth=".6">
                        <path d="M.4.4h7.200v7.200H.4zM.4 3.800h7.200M.4 5.700h7.200M2.800 2v5.600M5.200 2v5.600" fill="#fff" />
                        <path d="M0 0h8v2H0z" fill="#2b6cb0" stroke="none" />
                      </Svg>
                      {name}
                    </label>
                  </TreeRow>
                ))}
              </Tree>
              <ScrollBar $pad="9px 0 8px">
                <Chevron d={up} width={1.5} />
                <Thumb $w="9px" $h="129px" $m="auto 0 3px" />
                <Chevron width={1.5} />
              </ScrollBar>
            </TreeScroll>
          </TreePane>
          <Divider />
          <Preview>
            <PreviewHead>
              <h2>task</h2>
              <FileRefreshIcon />
            </PreviewHead>
            <PreviewBody>
              <DataTable>
                <colgroup>
                  <col style={{ width: "14%" }} />
                  <col style={{ width: "19%" }} />
                  <col style={{ width: "20%" }} />
                  <col />
                </colgroup>
                <thead>
                  <tr>
                    <th>id</th>
                    <th>licence_id</th>
                    <th>type</th>
                    <th>name</th>
                  </tr>
                </thead>
                <tbody>
                  {rows.map((row) => (
                    <tr key={row.id}>
                      <td className="num">{row.id}</td>
                      <td className="num">{row.licence}</td>
                      <td>{row.type}</td>
                      <td>{row.name}</td>
                    </tr>
                  ))}
                </tbody>
              </DataTable>
              <ScrollBar $pad="21px 0 6px">
                <Chevron d={up} width={1.5} />
                <Thumb $w="9px" $h="54px" $m="3px 0 auto" />
                <Chevron width={1.5} />
              </ScrollBar>
            </PreviewBody>
            <ScrollBar $across $pad="0 18px 0 8px">
              <Chevron d={left} width={1.5} />
              <Thumb $w="180px" $h="8px" $m="0 auto 0 4px" />
              <Chevron d={right} width={1.5} />
            </ScrollBar>
          </Preview>
        </DialogBody>
        <Footer>
          <DialogButton $w={69}>Select Related Tables</DialogButton>
          <LoadMark>
            <DialogButton $w={35} $primary>
              Load
            </DialogButton>
          </LoadMark>
          <DialogButton $w={53}>Transform Data</DialogButton>
          <DialogButton $w={35}>Cancel</DialogButton>
        </Footer>
        <NoteBox />
        <Note $x={-119} $y={71}>
          1. Select all checkboxes
        </Note>
        <NoteArrow $x={-10} $y={74} width="36" height="16" fill="none" stroke={red}>
          <path d="M1 2.500c10 0 18 3 28 8.500" strokeWidth="1.200" />
          <path d="M33 13l-6.500-.3 2.800-4.700z" fill={red} stroke="none" />
        </NoteArrow>
        <Note $x={380} $y={420}>
          2. Click `Load`
        </Note>
        <NoteArrow $x={364} $y={403} width="16" height="20" fill="none" stroke={red}>
          <path d="M5 5c1.500 6 4 10 8 14" strokeWidth="1.200" />
          <path d="M3.500 1l4 5-5 1.500z" fill={red} stroke="none" />
        </NoteArrow>
      </Dialog>
    </Overlay>
  );
}

function Visualizations() {
  return (
    <VizPane>
      <VizTitle>
        <h2>Visualizations</h2>
        <button aria-label="Collapse pane">
          <Chevron d={doubleRight} />
        </button>
      </VizTitle>
      <VizSub>Build visual</VizSub>
      <VizModes>
        <button aria-label="Build visual">
          <Svg size={16} box={16}>
            <path d="M2 1.500h11" />
            <path d="M1.500 4.500h13v4h-13zM1.500 10.500h13v4h-13z" fill={green} stroke="#333" strokeDasharray="1 1" />
          </Svg>
        </button>
        <button aria-label="Format page">
          <Svg size={16} box={16} stroke="#444">
            <path d="M7 14.500H2.500v-13h6l3 3v3M8.500 1.500v3h3" />
            <path d="M15 6l-5.500 6M9.500 11.500c-2 0-1.500 2.500-3 3 2 .5 4-.5 3.500-2.500" />
          </Svg>
        </button>
      </VizModes>
      <Notch viewBox="0 0 105 8" preserveAspectRatio="none" fill="none" stroke="#c8c6c4">
        <path d="M0 6.500h9l5-5 5 5h86" />
      </Notch>
      <VizGrid>
        {visuals.map(([name, art]) => (
          <button key={name} title={name} aria-label={name}>
            {typeof art === "string" ? (
              art
            ) : (
              <Svg size={12} box={12}>
                {art}
              </Svg>
            )}
          </button>
        ))}
      </VizGrid>
      <MoreDots aria-label="More visuals">...</MoreDots>
      <Wells>
        <WellLabel>Values</WellLabel>
        <Well>Add data fields here</Well>
        <WellLabel $strong>Drill through</WellLabel>
        <Toggle label="Cross-report" initial={false} />
        <Toggle label="Keep all filters" initial />
        <Well>Add drill-through fields here</Well>
      </Wells>
    </VizPane>
  );
}

function App() {
  return (
    <Shell>
      <GlobalStyle />
      <TitleBar>
        <TitleLeft>
          <Svg size={10} box={10} stroke="#fff">
            <path d="M.5.5h8l1 1v8h-9zM2.500.5v3h5v-3M2.500 9.500v-4h5v4" />
          </Svg>
          <Svg size={10} box={10} stroke="#7a7876">
            <path d="M1.500 1v3.500H5M1.700 4.500C4 1 8.500 2 8.500 5c0 2-2 3-4 4.500" />
          </Svg>
          <Svg size={10} box={10} stroke="#7a7876">
            <path d="M8.500 1v3.500H5M8.300 4.500C6 1 1.500 2 1.500 5c0 2 2 3 4 4.500" />
          </Svg>
          <span>Untitled - Power BI Desktop</span>
        </TitleLeft>
        <SearchBox>
          <Svg size={10} box={10} stroke="#333">
            <circle cx="6" cy="4" r="3" />
            <path d="M3.700 6.300L.5 9.500" />
          </Svg>
          <input type="search" placeholder="Search" aria-label="Search" />
        </SearchBox>
        <TitleRight>
          <SignIn>
            Sign in
            <Svg size={12} box={12} stroke="none">
              <circle cx="6" cy="6" r="6" fill="#fff" />
              <circle cx="6" cy="4" r="1.800" stroke="#333" />
              <path d="M2.800 7h6.400c0 2-1.400 3.200-3.200 3.200S2.800 9 2.800 7z" stroke="#333" />
            </Svg>
          </SignIn>
          <button aria-label="Minimize">
            <Chevron d="M1 4.500h6" stroke="#ddd" />
          </button>
          <button aria-label="Maximize">
            <Chevron d="M1.500 1.500h5v5h-5z" stroke="#ddd" />
          </button>
          <button aria-label="Close">
            <Chevron d="M1 1l6 6M7 1L1 7" stroke="#ddd" />
          </button>
        </TitleRight>
      </TitleBar>
      <MenuBar>
        {menu.map(([name, w]) => (
          <MenuTab key={name} $w={w} $active={name === "Home"}>
            <span>{name}</span>
          </MenuTab>
        ))}
        <ShareButton>
          <Svg size={10} box={10} stroke="#fff">
            <path d="M3.500 2.500h-3v7h8V7M2.500 7c0-3 1.500-4 4-4V1l3 3-3 3V5c-2 0-3 .5-4 2z" />
          </Svg>
          Share
          <Chevron stroke="#fff" size={7} />
        </ShareButton>
      </MenuBar>
      <RibbonBar />
      <Body>
        <SideNav>
          <SideButton $active aria-label="Report view">
            <Svg size={10} box={10} stroke="#333">
              <path d="M.5 1v8.500h9V1" />
              <path d="M2.500 9V5M4.500 9V3.500M6.500 9V5M8 9V2.500" strokeWidth="1.300" />
            </Svg>
          </SideButton>
          <SideButton aria-label="Table view">
            <Svg size={10} box={10} strokeWidth=".8">
              <path d="M.5 1h9v8.500h-9zM.5 3.500h9M.5 6.500h9M3.500 1v8.500M6.500 1v8.500" />
            </Svg>
          </SideButton>
          <SideButton aria-label="Model view">
            <Svg size={11} box={11} strokeWidth=".8">
              <path d="M.5 3.500h4v4h-4zM6.500.5h4v2.700h-4zM6.500 4.200h4v2.600h-4zM6.500 7.800h4v2.700h-4zM.5 5h4M4.500 5.500h2M4.500 4.500l2-2.500M4.500 6.500l2 2.500" />
            </Svg>
          </SideButton>
          <SideButton aria-label="DAX query view">
            <Svg size={11} box={11} strokeWidth=".8">
              <path d="M3 6.500v-6h3.500L9 3v6.500H7.500M6.500.5V3H9M.5 7v3c2.500 0 2.500-3 0-3zM3.500 10L4.700 7 6 10M7 7l2 3M9 7l-2 3" />
            </Svg>
          </SideButton>
        </SideNav>
        <Center>
          <Workspace>
            <Canvas>
              <ReportPage>
                <StarterRow>
                  <StarterCard>
                    <div>
                      <Svg size={26} box={26} stroke="none">
                        <path d="M8 1h9v6H8z" fill="#21a366" />
                        <path d="M17 1h8a1 1 0 0 1 1 1v5h-9z" fill="#33c481" />
                        <path d="M8 7h9v5.500H8z" fill="#107c41" />
                        <path d="M17 7h9v5.500h-9z" fill="#21a366" />
                        <path d="M8 12.500h9V23H9a1 1 0 0 1-1-1z" fill="#185c37" />
                        <path d="M17 12.500h9V18h-9z" fill="#107c41" />
                        <path d="M17 18h9v4a1 1 0 0 1-1 1h-8z" fill="#185c37" />
                        <rect x="1" y="6" width="12.500" height="12.500" rx="1" fill="#107c41" />
                        <path d="M4.700 8.500l5 7.500M9.700 8.500l-5 7.500" stroke="#fff" strokeWidth="1.800" />
                      </Svg>
                    </div>
                    <p>Import data from Excel</p>
                  </StarterCard>
                </StarterRow>
              </ReportPage>
            </Canvas>
            <SidePane $w={18} $line="1px solid #c8c6c4" $bg="#fff">
              <button aria-label="Expand filters">
                <Chevron d={doubleLeft} />
              </button>
              <FilterHeading>
                <Chevron d="M.5 4L7 .8v6.400zM.5 4h2" />
                <h2>Filters</h2>
              </FilterHeading>
            </SidePane>
          </Workspace>
          <PageTabs>
            <LayoutButton $active aria-label="Desktop layout">
              <span>
                <Svg size={13} box={13}>
                  <path d="M.5 2.500h12v7H.5zM4 11.500h5M5.500 9.500v2M7.500 9.500v2" />
                </Svg>
              </span>
            </LayoutButton>
            <LayoutButton aria-label="Mobile layout">
              <Svg size={13} box={13}>
                <path d="M3 .5h7v12H3zM5.500 10.500h2" />
              </Svg>
            </LayoutButton>
            <PageArrow aria-label="Previous page">
              <Chevron d={left} size={6} stroke="#a19f9d" />
            </PageArrow>
            <PageArrow aria-label="Next page">
              <Chevron d={right} size={6} stroke="#a19f9d" />
            </PageArrow>
            <PageTab>Page 1</PageTab>
            <AddPage aria-label="New page">
              <Chevron d="M4 1v6M1 4h6" stroke="#fff" width={1.5} />
            </AddPage>
          </PageTabs>
        </Center>
        <Visualizations />
        <SidePane $w={20} $line="0" $bg="#f3f2f1">
          <button aria-label="Expand data">
            <Chevron d={doubleLeft} />
          </button>
          <h2>Data</h2>
        </SidePane>
      </Body>
      <StatusBar>
        <span>Page 1 of 1</span>
        <Zoom>
          -
          <input type="range" min="0" max="100" defaultValue="53" aria-label="Zoom" />
          +
          <output>133%</output>
          <Svg size={10} box={10}>
            <path d="M.5 1.500h9v7h-9z" />
            <path d="M2.500 4V3H4M6 3h1.500v1M7.500 6v1H6M4 7H2.500V6" />
          </Svg>
        </Zoom>
      </StatusBar>
      <Navigator />
    </Shell>
  );
}

export default App;
